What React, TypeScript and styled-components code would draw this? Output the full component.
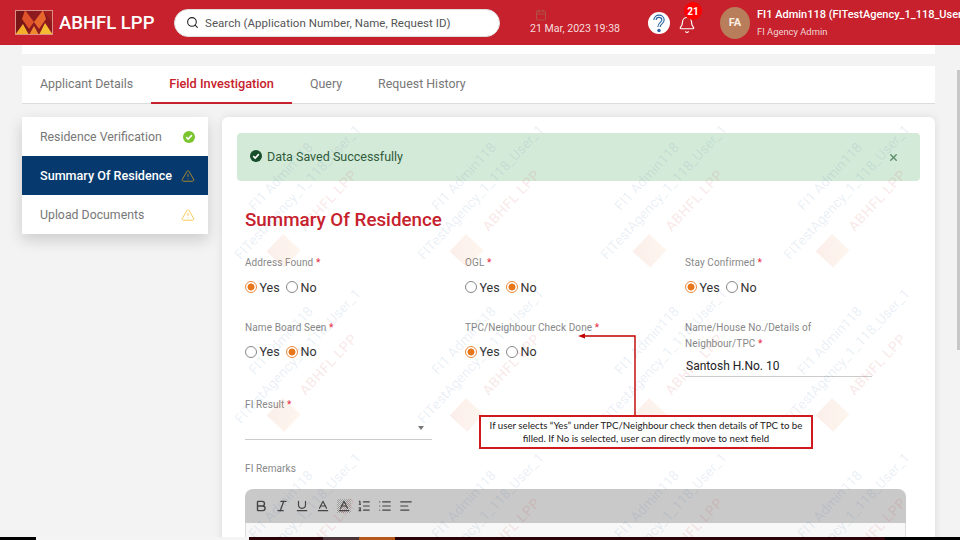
import React from 'react';
import styled, {createGlobalStyle} from 'styled-components';
import {AlignLeft, Baseline, Bell, Bold, Calendar, Italic, List, ListOrdered, Search, TriangleAlert, Underline, X} from 'lucide-react';

const GlobalStyle = createGlobalStyle`
  html, body {
    margin: 0;
    height: 100%;
    overflow: hidden;
    background: #f3f3f3;
    font-family: Roboto, "Liberation Sans", sans-serif;
  }
`

const Page = styled.div`
  position: relative;
  width: 960px;
  height: 540px;
  overflow: hidden;
  display: flex;
  flex-direction: column;
`

const Header = styled.header`
  flex: 0 0 45px;
  background: #c6212c;
  display: flex;
  align-items: center;
  padding-left: 15px;
  color: #fff;
  white-space: nowrap;
  overflow: hidden;
  & > * { flex-shrink: 0; }
`

const Brand = styled.div`
  width: 140px;
  margin-right: 19px;
  display: flex;
  align-items: center;
  gap: 6px;
  font-size: 18.5px;
  font-weight: 500;
`

const SearchBox = styled.div`
  width: 326px;
  height: 28px;
  box-sizing: border-box;
  background: #fff;
  border: 1px solid #ddd;
  border-radius: 14px;
  display: flex;
  align-items: center;
  gap: 6px;
  padding-left: 11px;
  color: #555;
  font-size: 11.5px;
  letter-spacing: 0.05px;
`

const DateBlock = styled.div`
  width: 90px;
  margin-left: 30px;
  font-size: 10.6px;
  line-height: 14px;
  color: #f6dcdc;
  display: flex;
  flex-direction: column;
  gap: 1px;
  svg { margin-left: 5px; color: #a85e50; }
`

const HelpIcon = styled.svg`
  width: 24px;
  height: 24px;
  margin-left: 27px;
`

const BellWrap = styled.div`
  position: relative;
  width: 18px;
  height: 18px;
  margin: 5px 0 0 7px;
`

const Badge = styled.span`
  position: absolute;
  left: 6px;
  top: -14px;
  width: 18px;
  height: 18px;
  border-radius: 50%;
  background: #ff0000;
  font-size: 10px;
  font-weight: 700;
  display: flex;
  align-items: center;
  justify-content: center;
`

const Avatar = styled.div`
  width: 30px;
  height: 32px;
  border-radius: 50%;
  margin: 0 7px 0 24px;
  background: #b87d5a;
  font-size: 11px;
  font-weight: 700;
  color: #fbeee0;
  display: flex;
  align-items: center;
  justify-content: center;
`

const UserInfo = styled.div`
  display: flex;
  flex-direction: column;
  gap: 3px;
`

const UserName = styled.div`
  font-size: 11px;
  font-weight: 500;
  line-height: 14px;
`

const UserRole = styled.div`
  font-size: 9.4px;
  line-height: 13px;
  color: #f3d6d6;
`

const Main = styled.main`
  padding: 0 25px 0 22px;
`

const TopStrip = styled.div`
  height: 9px;
  background: #fff;
  margin-bottom: 12px;
`

const Tabs = styled.nav`
  height: 38px;
  box-sizing: border-box;
  background: #fff;
  border-bottom: 1px solid #dcdcdc;
  display: flex;
`

const Tab = styled.div<{$active?: boolean}>`
  height: 38px;
  box-sizing: border-box;
  padding: 0 18px 2px;
  display: flex;
  align-items: center;
  font-size: ${p => (p.$active ? 12.8 : 12.4)}px;
  font-weight: ${p => (p.$active ? 500 : 400)};
  color: ${p => (p.$active ? '#c6212c' : '#777')};
  border-bottom: 2px solid ${p => (p.$active ? '#c6212c' : 'transparent')};
`

const Content = styled.div`
  display: flex;
  align-items: flex-start;
  gap: 14px;
  margin-top: 13px;
`

const SideMenu = styled.aside`
  flex: 0 0 186px;
  background: #fff;
  box-shadow: 0 6px 14px rgba(0, 0, 0, 0.16);
`

const SideItem = styled.div<{$active?: boolean}>`
  height: 39px;
  box-sizing: border-box;
  padding: 0 13px 0 18px;
  display: flex;
  align-items: center;
  justify-content: space-between;
  font-size: ${p => (p.$active ? 12.6 : 12.3)}px;
  font-weight: ${p => (p.$active ? 500 : 400)};
  color: ${p => (p.$active ? '#fff' : '#777')};
  background: ${p => (p.$active ? '#063a6e' : '#fff')};
`

const Card = styled.section`
  position: relative;
  flex: 0 0 713px;
  height: 500px;
  box-sizing: border-box;
  padding: 16px 15px 0;
  background: #fff;
  border-radius: 6px 6px 0 0;
  box-shadow: 0 0 8px rgba(0, 0, 0, 0.1);
  overflow: hidden;
`

const Alert = styled.div`
  height: 48px;
  box-sizing: border-box;
  padding: 0 21px 2px 13px;
  background: #d4ead9;
  border-radius: 4px;
  display: flex;
  align-items: center;
  gap: 5px;
  font-size: 12.5px;
  color: #2f5c3b;
  svg:last-child { margin: 2px 0 0 auto; color: #5a8a68; }
`

const FormBody = styled.div`
  padding-left: 8px;
`

const Title = styled.h2`
  margin: 25px 0 21px;
  font-size: 18.8px;
  line-height: 28px;
  font-weight: 500;
  color: #c6212c;
`

const FormGrid = styled.div`
  display: grid;
  grid-template-columns: repeat(3, 220px);
  row-gap: 20px;
`

const Field = styled.div`
  display: flex;
  flex-direction: column;
`

const Label = styled.label`
  font-size: 10px;
  letter-spacing: 0.1px;
  line-height: 16px;
  color: #888;
  &::after {
    content: ' *';
    color: #e8283a;
  }
`

const PlainLabel = styled.label`
  font-size: 10px;
  letter-spacing: 0.1px;
  line-height: 16px;
  color: #888;
`

const RadioRow = styled.div`
  display: flex;
  align-items: center;
  height: 14px;
  margin: 9px 0 5.5px;
  font-size: 12.5px;
  color: #333;
`

const RadioMark = styled.span<{$on?: boolean}>`
  width: 12px;
  height: 12px;
  box-sizing: border-box;
  border-radius: 50%;
  border: 1px solid ${p => (p.$on ? '#ec8a3c' : '#888')};
  background: ${p => (p.$on ? 'radial-gradient(circle, #e8761a 0 3.2px, #fff 3.8px)' : '#fff')};
  margin-right: 2.5px;
`

const RadioText = styled.span`
  width: 26.5px;
`

const ValueInput = styled.div`
  width: 187px;
  height: 25px;
  box-sizing: border-box;
  border-bottom: 1px solid #ccc;
  display: flex;
  align-items: center;
  font-size: 12px;
  color: #222;
  padding: 4px 0 0 1px;
`

const SelectBox = styled.div`
  width: 187px;
  height: 27px;
  box-sizing: border-box;
  border-bottom: 1px solid #ccc;
  display: flex;
  align-items: center;
  justify-content: flex-end;
  padding: 4px 8px 0 0;
  &::after {
    content: '';
    border: 3.5px solid transparent;
    border-top: 4.5px solid #777;
    border-bottom: 0;
  }
`

const RemarksField = styled.div`
  margin-top: 17px;
`

const Editor = styled.div`
  width: 661px;
  margin-top: 12px;
  border-radius: 8px 8px 0 0;
  overflow: hidden;
`

const Toolbar = styled.div`
  height: 34px;
  background: #c9c9c9;
  display: flex;
  align-items: center;
  gap: 6.7px;
  padding-left: 9px;
  color: #444;
`

const Highlight = styled.span`
  width: 14px;
  height: 14px;
  display: flex;
  background: repeating-conic-gradient(#9a9a9a 0 25%, #d4d4d4 0 50%) 0 0 / 2px 2px;
`

const EditorBody = styled.div`
  height: 60px;
  background: #f8f8f8;
  border: 1px solid #ddd;
  border-top: 0;
`

const WatermarkLayer = styled.div`
  position: absolute;
  left: -16px;
  top: -7px;
  display: grid;
  grid-template-columns: repeat(4, 183px);
  grid-auto-rows: 164px;
  pointer-events: none;
`

const WatermarkTile = styled.div`
  display: flex;
  flex-direction: column;
  align-items: center;
  justify-content: center;
  white-space: nowrap;
  transform: rotate(-47deg);
  font-size: 14px;
  line-height: 23px;
  color: rgba(50, 100, 160, 0.11);
`

const WatermarkBrand = styled.div`
  display: flex;
  align-items: center;
  gap: 6px;
  height: 23px;
  transform: translateY(5px);
  color: rgba(198, 33, 44, 0.1);
  font-weight: 500;
  letter-spacing: 0.6px;
`

const WatermarkLogo = styled.span`
  width: 24px;
  height: 24px;
  background: linear-gradient(135deg, rgba(220, 90, 50, 0.1), rgba(240, 150, 70, 0.09));
  transform: translate(-11px, 2px);
`

const Callout = styled.div`
  position: absolute;
  left: 479px;
  top: 415px;
  width: 334px;
  height: 34px;
  box-sizing: border-box;
  border: 2px solid #d0181f;
  background: #fff;
  font-family: Lato, "Liberation Sans", sans-serif;
  font-size: 9.7px;
  line-height: 13px;
  color: #222;
  text-align: center;
  display: flex;
  align-items: center;
  justify-content: center;
  padding: 0 6px;
`

const ArrowOverlay = styled.svg`
  position: absolute;
  left: 575px;
  top: 330px;
  width: 64px;
  height: 86px;
`

const ScrollThumb = styled.div`
  position: absolute;
  right: 0;
  top: 70px;
  width: 3px;
  height: 280px;
  background: #c8c8c8;
`

const Taskbar = styled.div`
  position: absolute;
  left: 0;
  right: 0;
  bottom: 0;
  height: 3px;
  display: flex;
  background: #000;
`

const TaskSegment = styled.span<{$w: number; $c: string}>`
  width: ${p => p.$w}px;
  background: ${p => p.$c};
`

const Logo = () => (
  <svg width="38" height="25" viewBox="0 0 38 25">
    <rect width="38" height="25" fill="#8c1a1f" />
    <polygon points="0,0 10,0 19,12 10,25 0,25" fill="#7a1518" />
    <polygon points="0,25 8,14 14,25" fill="#f4b02a" />
    <polygon points="10,0 19,12 14,19 7,9" fill="#e0522a" />
    <polygon points="28,0 19,12 24,19 31,9" fill="#e8672c" />
    <polygon points="14,25 19,16 24,25" fill="#f08a2c" />
    <polygon points="24,25 30,13 38,25" fill="#f6bd32" />
    <polygon points="28,0 38,0 38,14" fill="#a3201f" />
    <rect x="0.5" y="0.5" width="37" height="24" fill="none" stroke="#d98f85" />
  </svg>
)

const GreenCheck = ({color, size}: {color: string; size: number}) => (
  <svg width={size} height={size} viewBox="0 0 12 12">
    <circle cx="6" cy="6" r="6" fill={color} />
    <path d="M3.2 6.2 5.2 8.1 8.9 4.1" fill="none" stroke="#fff" strokeWidth="1.6" />
  </svg>
)

const YesNo = ({yes}: {yes: boolean}) => (
  <RadioRow>
    <RadioMark $on={yes} />
    <RadioText>Yes</RadioText>
    <RadioMark $on={!yes} />
    <span>No</span>
  </RadioRow>
)

const App = () => {
  const tiles = Array.from({length: 12}, (_, i) => i)

  return (
    <Page>
      <GlobalStyle />
      <Header>
        <Brand>
          <Logo />
          <span>ABHFL LPP</span>
        </Brand>
        <SearchBox>
          <Search size={13} color="#222" strokeWidth={2} />
          <span>Search (Application Number, Name, Request ID)</span>
        </SearchBox>
        <DateBlock>
          <Calendar size={12} strokeWidth={1.5} />
          <span>21 Mar, 2023 19:38</span>
        </DateBlock>
        <HelpIcon viewBox="0 0 24 24">
          <circle cx="12" cy="12" r="11" fill="#fff" />
          <path d="M8 9c0-5 8-5 8 0 0 3-4 3-4 7" fill="none" stroke="#2a62a0" strokeWidth="3.4" />
          <path d="M8 9c0-5 8-5 8 0 0 3-4 3-4 7" fill="none" stroke="#fff" strokeWidth="1.2" />
          <circle cx="12" cy="19.5" r="1.7" fill="#2a62a0" />
        </HelpIcon>
        <BellWrap>
          <Bell size={18} strokeWidth={1.6} />
          <Badge>21</Badge>
        </BellWrap>
        <Avatar>FA</Avatar>
        <UserInfo>
          <UserName>FI1 Admin118 (FITestAgency_1_118_User_1)</UserName>
          <UserRole>FI Agency Admin</UserRole>
        </UserInfo>
      </Header>
      <Main>
        <TopStrip />
        <Tabs>
          <Tab>Applicant Details</Tab>
          <Tab $active>Field Investigation</Tab>
          <Tab>Query</Tab>
          <Tab>Request History</Tab>
        </Tabs>
        <Content>
          <SideMenu>
            <SideItem>
              Residence Verification
              <GreenCheck color="#7ac52e" size={12} />
            </SideItem>
            <SideItem $active>
              Summary Of Residence
              <TriangleAlert size={14} color="#b08a2a" strokeWidth={1.6} />
            </SideItem>
            <SideItem>
              Upload Documents
              <TriangleAlert size={14} color="#f6c850" strokeWidth={1.6} />
            </SideItem>
          </SideMenu>
          <Card>
            <Alert>
              <GreenCheck color="#174f2a" size={12} />
              Data Saved Successfully
              <X size={11} strokeWidth={3} />
            </Alert>
            <FormBody>
              <Title>Summary Of Residence</Title>
              <FormGrid>
                <Field>
                  <Label>Address Found</Label>
                  <YesNo yes />
                </Field>
                <Field>
                  <Label>OGL</Label>
                  <YesNo yes={false} />
                </Field>
                <Field>
                  <Label>Stay Confirmed</Label>
                  <YesNo yes />
                </Field>
                <Field>
                  <Label>Name Board Seen</Label>
                  <YesNo yes={false} />
                </Field>
                <Field>
                  <Label>TPC/Neighbour Check Done</Label>
                  <YesNo yes />
                </Field>
                <Field>
                  <Label>Name/House No./Details of<br />Neighbour/TPC</Label>
                  <ValueInput>Santosh H.No. 10</ValueInput>
                </Field>
                <Field>
                  <Label>FI Result</Label>
                  <SelectBox />
                </Field>
              </FormGrid>
              <RemarksField>
                <PlainLabel>FI Remarks</PlainLabel>
                <Editor>
                  <Toolbar>
                    <Bold size={14} strokeWidth={2.4} />
                    <Italic size={14} strokeWidth={2.2} />
                    <Underline size={14} />
                    <Baseline size={14} />
                    <Highlight><Baseline size={14} /></Highlight>
                    <ListOrdered size={14} />
                    <List size={14} />
                    <AlignLeft size={14} />
                  </Toolbar>
                  <EditorBody />
                </Editor>
              </RemarksField>
            </FormBody>
            <WatermarkLayer>
              {tiles.map((t) => (
                <WatermarkTile key={t}>
                  <div>FI1 Admin118</div>
                  <div>FITestAgency_1_118_User_1</div>
                  <WatermarkBrand>
                    <WatermarkLogo />
                    ABHFL LPP
                  </WatermarkBrand>
                </WatermarkTile>
              ))}
            </WatermarkLayer>
          </Card>
        </Content>
      </Main>
      <ArrowOverlay viewBox="0 0 64 86">
        <path d="M60 86V6H8" fill="none" stroke="#c00000" strokeWidth="1.4" />
        <polygon points="3,6 10,3.5 10,8.5" fill="#c00000" />
      </ArrowOverlay>
      <Callout>If user selects “Yes” under TPC/Neighbour check then details of TPC to be filled. If No is selected, user can directly move to next field</Callout>
      <ScrollThumb />
      <Taskbar>
        <TaskSegment $w={36} $c="#000" />
        <TaskSegment $w={213} $c="#f4f4f4" />
        <TaskSegment $w={74} $c="#2a0208" />
        <TaskSegment $w={36} $c="#4a3438" />
        <TaskSegment $w={36} $c="#b4581c" />
        <TaskSegment $w={490} $c="#2a0208" />
      </Taskbar>
    </Page>
  );
};

export default App;
